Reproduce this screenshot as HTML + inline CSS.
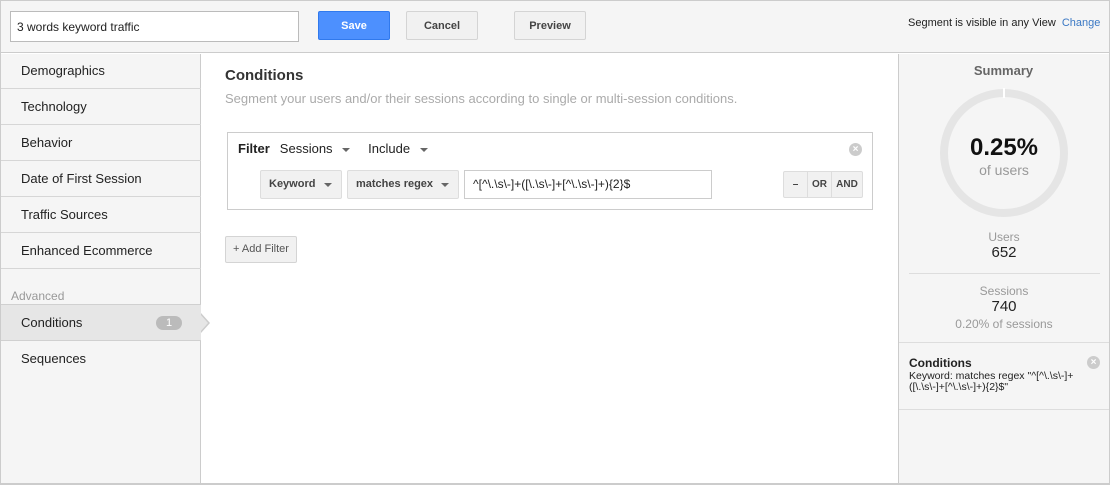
<!DOCTYPE html>
<html><head><meta charset="utf-8"><style>
*{box-sizing:border-box;margin:0;padding:0}
body{width:1110px;height:485px;font-family:"Liberation Sans",Arial,sans-serif;font-size:13px;color:#222;background:#fff;position:relative;overflow:hidden}
.a{position:absolute}
.btn{position:absolute;border:1px solid #d4d4d4;background:#f1f1f1;border-radius:2px;font-size:11px;font-weight:bold;color:#444;text-align:center}
.nav{position:absolute;left:1px;width:200px;height:36px;border-bottom:1px solid #d6d6d6;padding-left:20px;line-height:35px;font-size:13px}
.dd{position:absolute;border:1px solid #ddd;background:#f1f1f1;font-size:11px;font-weight:bold;color:#444;line-height:27px;padding-left:8px;border-radius:2px;white-space:nowrap}
.tri{display:inline-block;width:0;height:0;border-left:4px solid transparent;border-right:4px solid transparent;border-top:4px solid #666;vertical-align:middle}
.dd .tri{position:absolute;right:9px;top:12px}
.x{position:absolute;width:13px;height:13px;border-radius:50%;background:#ccc;color:#fff;font-size:10px;line-height:13px;text-align:center;font-weight:bold}
</style></head><body>
<div class="a" style="left:0;top:0;width:1110px;height:485px;border:1px solid #ccc;border-bottom:2px solid #ccc"></div>
<div class="a" style="left:1px;top:1px;width:1108px;height:52px;background:#f5f5f5;border-bottom:1px solid #ccc"></div>
<div class="a" style="left:10px;top:11px;width:289px;height:31px;border:1px solid #bbb;background:#fff;padding-left:6px;line-height:30px;font-size:12px">3 words keyword traffic</div>
<div class="btn" style="left:318px;top:11px;width:72px;height:29px;background:#4d90fe;border-color:#3079ed;color:#fff;line-height:28px">Save</div>
<div class="btn" style="left:406px;top:11px;width:72px;height:29px;line-height:28px">Cancel</div>
<div class="btn" style="left:514px;top:11px;width:72px;height:29px;line-height:28px">Preview</div>
<div class="a" style="left:908px;top:17px;font-size:11px">Segment is visible in any View <span style="color:#3a78c4;margin-left:3px">Change</span></div>

<div class="a" style="left:1px;top:54px;width:200px;height:429px;background:#f5f5f5;border-right:1px solid #ccc"></div>
<div class="nav" style="top:53px">Demographics</div>
<div class="nav" style="top:89px">Technology</div>
<div class="nav" style="top:125px">Behavior</div>
<div class="nav" style="top:161px">Date of First Session</div>
<div class="nav" style="top:197px">Traffic Sources</div>
<div class="nav" style="top:233px">Enhanced Ecommerce</div>
<div class="a" style="left:11px;top:289px;color:#999;font-size:12px">Advanced</div>
<div class="nav" style="top:304px;height:37px;background:#e6e6e6;border-top:1px solid #d0d0d0;border-bottom:1px solid #d0d0d0">Conditions
<span class="a" style="left:155px;top:11px;width:26px;height:14px;border-radius:7px;background:#bbb;color:#fff;font-size:11px;line-height:14px;text-align:center">1</span></div>
<div class="a" style="left:201px;top:313px;width:0;height:0;border-top:10px solid transparent;border-bottom:10px solid transparent;border-left:9px solid #ccc"></div>
<div class="a" style="left:200px;top:314px;width:0;height:0;border-top:9px solid transparent;border-bottom:9px solid transparent;border-left:8px solid #e6e6e6"></div>
<div class="nav" style="top:341px;border:none">Sequences</div>

<div class="a" style="left:225px;top:67px;font-size:15px;font-weight:bold;color:#333">Conditions</div>
<div class="a" style="left:225px;top:91px;font-size:13px;color:#aaa">Segment your users and/or their sessions according to single or multi-session conditions.</div>
<div class="a" style="left:227px;top:132px;width:646px;height:78px;border:1px solid #ccc"></div>
<div class="a" style="left:238px;top:141px;font-size:13px"><b>Filter</b><span style="margin-left:10px">Sessions</span> <span class="tri" style="margin-left:6px"></span><span style="margin-left:18px">Include</span> <span class="tri" style="margin-left:6px"></span></div>
<div class="x" style="left:849px;top:143px">×</div>
<div class="dd" style="left:260px;top:170px;width:82px;height:29px">Keyword<span class="tri"></span></div>
<div class="dd" style="left:347px;top:170px;width:112px;height:29px">matches regex<span class="tri"></span></div>
<div class="a" style="left:464px;top:170px;width:248px;height:29px;border:1px solid #ccc;padding-left:8px;line-height:27px;font-size:12px">^[^\.\s\-]+([\.\s\-]+[^\.\s\-]+){2}$</div>
<div class="dd" style="left:783px;top:171px;width:80px;height:27px;padding:0;line-height:25px;font-size:10px;display:flex"><span style="width:24px;text-align:center;border-right:1px solid #ddd">–</span><span style="width:24px;text-align:center;border-right:1px solid #ddd">OR</span><span style="flex:1;text-align:center">AND</span></div>
<div class="btn" style="left:225px;top:236px;width:72px;height:27px;line-height:25px;font-weight:normal;color:#555">+ Add Filter</div>

<div class="a" style="left:898px;top:54px;width:211px;height:429px;background:#f5f5f5;border-left:1px solid #ccc"></div>
<div class="a" style="left:898px;top:63px;width:211px;text-align:center;font-weight:bold;color:#666;font-size:13px">Summary</div>
<div class="a" style="left:940px;top:89px;width:128px;height:128px;border-radius:50%;border:8px solid #e5e5e5"></div>
<div class="a" style="left:1003px;top:88px;width:2px;height:10px;background:#fff"></div>
<div class="a" style="left:898px;top:134px;width:212px;text-align:center;font-size:24px;font-weight:bold;color:#111">0.25%</div>
<div class="a" style="left:898px;top:162px;width:212px;text-align:center;font-size:14px;color:#999">of users</div>
<div class="a" style="left:898px;top:230px;width:212px;text-align:center;font-size:12px;color:#999">Users</div>
<div class="a" style="left:898px;top:244px;width:212px;text-align:center;font-size:15px;color:#222">652</div>
<div class="a" style="left:909px;top:273px;width:191px;height:1px;background:#ddd"></div>
<div class="a" style="left:898px;top:284px;width:212px;text-align:center;font-size:12px;color:#999">Sessions</div>
<div class="a" style="left:898px;top:298px;width:212px;text-align:center;font-size:15px;color:#222">740</div>
<div class="a" style="left:898px;top:317px;width:212px;text-align:center;font-size:12px;color:#999">0.20% of sessions</div>
<div class="a" style="left:899px;top:342px;width:210px;height:1px;background:#ddd"></div>
<div class="a" style="left:909px;top:356px;font-size:12px;font-weight:bold">Conditions</div>
<div class="x" style="left:1087px;top:356px">×</div>
<div class="a" style="left:909px;top:371px;font-size:10.5px;line-height:11px;width:195px">Keyword: matches regex "^[^\.\s\-]+<br>([\.\s\-]+[^\.\s\-]+){2}$"</div>
<div class="a" style="left:899px;top:409px;width:210px;height:1px;background:#ddd"></div>
</body></html>
